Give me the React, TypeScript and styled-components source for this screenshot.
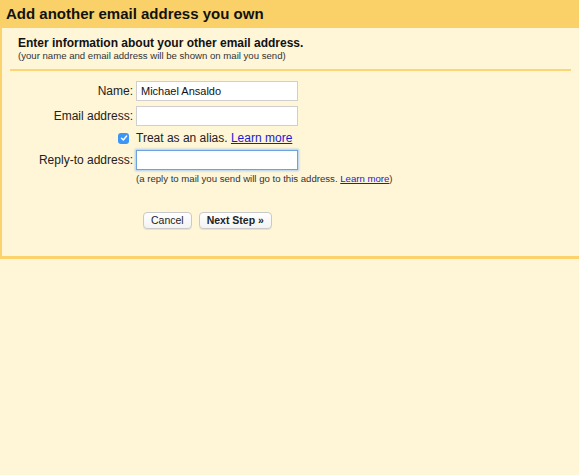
import React from 'react';
import styled, { createGlobalStyle } from 'styled-components';

const GlobalStyle = createGlobalStyle`
  html, body {
    margin: 0;
    padding: 0;
    background: #fff5d7;
    font-family: 'Liberation Sans', Arial, sans-serif;
    color: #222;
  }
`;

const Header = styled.h1`
  margin: 0;
  height: 28px;
  line-height: 28px;
  padding-left: 6px;
  background: #f9d168;
  font-size: 15px;
  font-weight: bold;
  color: #111;
`;

const Panel = styled.div`
  border-left: 2px solid #fcd26c;
  border-bottom: 3px solid #fcd26c;
  padding: 0 8px 27px;
`;

const Intro = styled.div`
  padding: 8px 0 8px 8px;
  border-bottom: 2px solid #fcd574;
`;

const IntroTitle = styled.div`
  font-size: 12px;
  font-weight: bold;
  line-height: 14px;
  color: #111;
`;

const IntroNote = styled.div`
  font-size: 9.6px;
  line-height: 11px;
  color: #333;
`;

const Form = styled.div`
  display: grid;
  grid-template-columns: 123px 162px;
  column-gap: 3px;
  row-gap: 5px;
  padding-top: 10px;
`;

const Label = styled.label<{ $top?: boolean }>`
  font-size: 12px;
  text-align: right;
  align-self: ${(p) => (p.$top ? 'start' : 'center')};
  margin-top: ${(p) => (p.$top ? '3px' : '0')};
  color: #222;
`;

const Field = styled.input<{ $focused?: boolean }>`
  box-sizing: border-box;
  width: 162px;
  height: 20px;
  margin: 0;
  padding: 0 4px;
  border: 1px solid ${(p) => (p.$focused ? '#6ca2e0' : '#cfcfcf')};
  box-shadow: ${(p) => (p.$focused ? '0 0 2px 1px #a9ccf3' : 'none')};
  background: #fff;
  font-family: 'Liberation Sans', Arial, sans-serif;
  font-size: 11px;
  color: #111;
  outline: none;
`;

const CheckCell = styled.div`
  display: flex;
  justify-content: flex-end;
  align-items: center;
  padding-right: 4px;
  height: 14px;
`;

const CheckBox = styled.span`
  display: inline-flex;
  align-items: center;
  justify-content: center;
  width: 11px;
  height: 11px;
  border-radius: 3px;
  background: #3c96f6;
`;

const InlineText = styled.div`
  font-size: 12px;
  line-height: 14px;
  color: #222;
  white-space: nowrap;
`;

const Link = styled.a`
  color: #1a1ad6;
  text-decoration: underline;
  cursor: pointer;
`;

const Stack = styled.div`
  display: flex;
  flex-direction: column;
`;

const Help = styled.div`
  margin-top: 3px;
  font-size: 9.6px;
  line-height: 12px;
  color: #333;
  white-space: nowrap;
`;

const Buttons = styled.div`
  grid-column: 2;
  display: flex;
  gap: 7px;
  margin: 22px 0 0 7px;
`;

const Button = styled.button<{ $primary?: boolean }>`
  box-sizing: border-box;
  height: 17px;
  padding: 0 7px;
  border: 1px solid #c9c9c9;
  border-radius: 4px;
  background: linear-gradient(#ffffff, #f3f3f3);
  box-shadow: 0 1px 0 rgba(0, 0, 0, 0.08);
  font-family: 'Liberation Sans', Arial, sans-serif;
  font-size: 10.5px;
  font-weight: ${(p) => (p.$primary ? 'bold' : 'normal')};
  color: #222;
  line-height: 15px;
`;

const App = () => (
  <>
    <GlobalStyle />
    <Header>Add another email address you own</Header>
    <Panel>
      <Intro>
        <IntroTitle>Enter information about your other email address.</IntroTitle>
        <IntroNote>(your name and email address will be shown on mail you send)</IntroNote>
      </Intro>
      <Form>
        <Label>Name:</Label>
        <Field defaultValue="Michael Ansaldo" />
        <Label>Email address:</Label>
        <Field />
        <CheckCell>
          <CheckBox>
            <svg width="8" height="8" viewBox="0 0 8 8">
              <path d="M1.5 4.2 L3.3 6 L6.6 2" fill="none" stroke="#fff" strokeWidth="1.4" strokeLinecap="round" strokeLinejoin="round" />
            </svg>
          </CheckBox>
        </CheckCell>
        <InlineText>
          Treat as an alias. <Link>Learn more</Link>
        </InlineText>
        <Label $top>Reply-to address:</Label>
        <Stack>
          <Field $focused />
          <Help>
            (a reply to mail you send will go to this address. <Link>Learn more</Link>)
          </Help>
        </Stack>
        <Buttons>
          <Button>Cancel</Button>
          <Button $primary>Next Step »</Button>
        </Buttons>
      </Form>
    </Panel>
  </>
);

export default App;
